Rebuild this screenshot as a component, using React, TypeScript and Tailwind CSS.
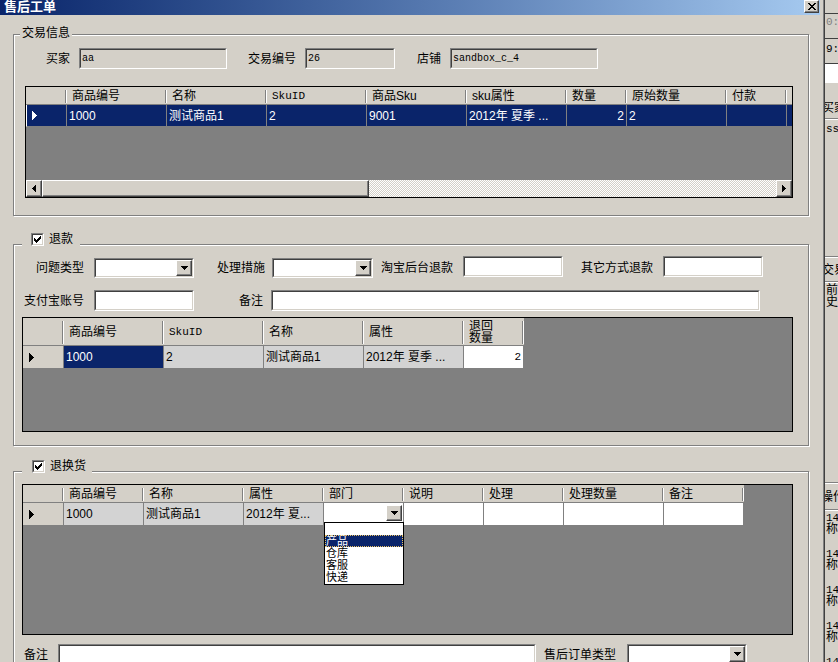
import React from "react"

const font = "font-['Liberation_Sans','Noto_Sans_CJK_SC',sans-serif]"
const mono = "font-['Liberation_Mono','Noto_Sans_CJK_SC',monospace]"

function Tri({ color = "#000" }: { color?: string }) {
  return (
    <svg width="5" height="9" viewBox="0 0 5 9" shapeRendering="crispEdges">
      <polygon points="0,0 5,4.5 0,9" fill={color} />
    </svg>
  )
}

function DownArrow() {
  return (
    <svg width="7" height="4" viewBox="0 0 7 4" shapeRendering="crispEdges">
      <polygon points="0,0 7,0 3.5,4" fill="#000" />
    </svg>
  )
}

function Raised({ className = "", children }: { className?: string; children?: React.ReactNode }) {
  return (
    <div
      className={`flex items-center justify-center shrink-0 bg-[#d4d0c8] border border-t-white border-l-white border-b-[#404040] border-r-[#404040] shadow-[inset_-1px_-1px_0_#808080] ${className}`}
    >
      {children}
    </div>
  )
}

function Sunken({
  className = "",
  inner = "bg-white",
  children,
}: {
  className?: string
  inner?: string
  children?: React.ReactNode
}) {
  return (
    <div
      className={`shrink-0 border border-t-[#808080] border-l-[#808080] border-b-white border-r-white ${className}`}
    >
      <div
        className={`h-full border border-t-[#404040] border-l-[#404040] border-b-[#d4d0c8] border-r-[#d4d0c8] ${inner}`}
      >
        {children}
      </div>
    </div>
  )
}

function Combo({ className = "" }: { className?: string }) {
  return (
    <Sunken className={className}>
      <div className="h-full flex justify-end">
        <Raised className="w-[16px] h-full">
          <DownArrow />
        </Raised>
      </div>
    </Sunken>
  )
}

function CheckBox() {
  return (
    <div className="w-[13px] h-[13px] shrink-0 border border-t-[#808080] border-l-[#808080] border-b-white border-r-white">
      <div className="w-full h-full border border-t-[#404040] border-l-[#404040] border-b-[#d4d0c8] border-r-[#d4d0c8] bg-white flex items-center justify-center">
        <svg width="7" height="7" viewBox="0 0 7 7" shapeRendering="crispEdges">
          <path d="M0 2h1v3h-1z M1 3h1v3h-1z M2 4h1v3h-1z M3 3h1v3h-1z M4 2h1v3h-1z M5 1h1v3h-1z M6 0h1v3h-1z" fill="#000" />
        </svg>
      </div>
    </div>
  )
}

function Label({ className = "", children }: { className?: string; children: React.ReactNode }) {
  return (
    <div className={`shrink-0 flex items-center justify-end whitespace-nowrap leading-[14px] ${className}`}>
      {children}
    </div>
  )
}

function Group({ className = "", children }: { className?: string; children: React.ReactNode }) {
  return (
    <div
      className={`relative w-[796px] shrink-0 border border-[#808080] shadow-[inset_1px_1px_0_#fff,1px_1px_0_#fff] flex flex-col ${className}`}
    >
      {children}
    </div>
  )
}

function HeadCell({ className = "", children }: { className?: string; children?: React.ReactNode }) {
  return (
    <div className={`shrink-0 h-full flex bg-[#d4d0c8] border-b border-b-[#808080] ${className}`}>
      <div className="flex-1 pl-[5px] flex items-center whitespace-nowrap overflow-hidden leading-[12px]">
        {children}
      </div>
      <div className="w-[2px] mt-[3px] mb-[1px] border-l border-l-[#808080] border-r border-r-white" />
    </div>
  )
}

function Cell({ className = "", children }: { className?: string; children?: React.ReactNode }) {
  return (
    <div
      className={`shrink-0 h-full px-[2px] flex items-center whitespace-nowrap overflow-hidden border-r border-r-[#808080] border-b border-b-[#808080] ${className}`}
    >
      {children}
    </div>
  )
}

const grid1 = [
  { w: "w-[100px]", h: "商品编号", v: "1000" },
  { w: "w-[100px]", h: "名称", v: "测试商品1" },
  { w: "w-[100px]", h: <span className={`${mono} text-[11px]`}>SkuID</span>, v: "2" },
  { w: "w-[100px]", h: "商品Sku", v: "9001" },
  { w: "w-[100px]", h: "sku属性", v: "2012年 夏季 ..." },
  { w: "w-[60px]", h: "数量", v: "2", right: true },
  { w: "w-[100px]", h: "原始数量", v: "2" },
  { w: "w-[60px]", h: "付款", v: "" },
  { w: "w-[100px]", h: "", v: "" },
]

function TradeGrid() {
  return (
    <div className="ml-[11px] mt-[17px] w-[768px] h-[112px] shrink-0 border border-black bg-[#808080] flex flex-col overflow-hidden">
      <div className="flex h-[18px] shrink-0">
        <HeadCell className="w-[41px]" />
        {grid1.map((c, i) => (
          <HeadCell key={i} className={c.w}>
            {c.h}
          </HeadCell>
        ))}
      </div>
      <div className="flex h-[22px] shrink-0 text-white">
        <Cell className="w-[41px] bg-[#0a246a] border-l border-l-white pl-[5px]">
          <Tri color="#fff" />
        </Cell>
        {grid1.map((c, i) => (
          <Cell key={i} className={`${c.w} bg-[#0a246a] ${c.right ? "justify-end" : ""}`}>
            {c.v}
          </Cell>
        ))}
      </div>
      <div className="flex-1" />
      <div className="h-[17px] shrink-0 flex">
        <Raised className="w-[16px] h-full">
          <svg width="4" height="7" viewBox="0 0 4 7" shapeRendering="crispEdges">
            <polygon points="4,0 0,3.5 4,7" fill="#000" />
          </svg>
        </Raised>
        <Raised className="w-[327px] h-full" />
        <div className="flex-1 bg-[repeating-conic-gradient(#ffffff_0%_25%,#d4d0c8_0%_50%)] bg-[length:2px_2px]" />
        <Raised className="w-[16px] h-full">
          <svg width="4" height="7" viewBox="0 0 4 7" shapeRendering="crispEdges">
            <polygon points="0,0 4,3.5 0,7" fill="#000" />
          </svg>
        </Raised>
      </div>
    </div>
  )
}

function RefundGrid() {
  return (
    <div className="ml-[8px] mt-[6px] w-[771px] h-[115px] shrink-0 border border-black bg-[#808080] flex flex-col overflow-hidden">
      <div className="flex h-[28px] shrink-0">
        <HeadCell className="w-[41px]" />
        <HeadCell className="w-[100px]">商品编号</HeadCell>
        <HeadCell className="w-[100px]">
          <span className={`${mono} text-[11px]`}>SkuID</span>
        </HeadCell>
        <HeadCell className="w-[100px]">名称</HeadCell>
        <HeadCell className="w-[100px]">属性</HeadCell>
        <HeadCell className="w-[60px]">
          <span className="leading-[12px]">
            退回
            <br />
            数量
          </span>
        </HeadCell>
      </div>
      <div className="flex h-[23px] shrink-0">
        <Cell className="w-[41px] bg-[#d4d0c8] pl-[6px]">
          <Tri />
        </Cell>
        <Cell className="w-[100px] bg-[#0a246a] text-white">1000</Cell>
        <Cell className="w-[100px] bg-[#d3d3d3]">2</Cell>
        <Cell className="w-[100px] bg-[#d3d3d3]">测试商品1</Cell>
        <Cell className="w-[100px] bg-[#d3d3d3]">2012年 夏季 ...</Cell>
        <Cell className="w-[60px] bg-white justify-end">
          <span className={`${mono} text-[11px]`}>2</span>
        </Cell>
      </div>
    </div>
  )
}

function ExchangeGrid() {
  return (
    <div className="ml-[8px] mt-[12px] w-[771px] h-[151px] shrink-0 border border-black bg-[#808080] flex flex-col overflow-hidden">
      <div className="flex h-[18px] shrink-0">
        <HeadCell className="w-[41px]" />
        <HeadCell className="w-[80px]">商品编号</HeadCell>
        <HeadCell className="w-[100px]">名称</HeadCell>
        <HeadCell className="w-[80px]">属性</HeadCell>
        <HeadCell className="w-[80px]">部门</HeadCell>
        <HeadCell className="w-[80px]">说明</HeadCell>
        <HeadCell className="w-[80px]">处理</HeadCell>
        <HeadCell className="w-[100px]">处理数量</HeadCell>
        <HeadCell className="w-[80px]">备注</HeadCell>
      </div>
      <div className="flex h-[23px] shrink-0">
        <Cell className="w-[41px] bg-[#d4d0c8] pl-[6px]">
          <Tri />
        </Cell>
        <Cell className="w-[80px] bg-[#d3d3d3]">1000</Cell>
        <Cell className="w-[100px] bg-[#d3d3d3]">测试商品1</Cell>
        <Cell className="w-[80px] bg-[#d3d3d3]">2012年 夏...</Cell>
        <div className="w-[80px] h-full shrink-0 flex flex-col border-r border-r-[#808080]">
          <div className="h-[19px] bg-white flex justify-end items-center pr-[1px]">
            <Raised className="w-[16px] h-[16px]">
              <DownArrow />
            </Raised>
          </div>
        </div>
        <Cell className="w-[80px] bg-white" />
        <Cell className="w-[80px] bg-white" />
        <Cell className="w-[100px] bg-white" />
        <Cell className="w-[80px] bg-white" />
      </div>
    </div>
  )
}

function Etch() {
  return <div className="h-[2px] shrink-0 border-t border-t-[#808080] border-b border-b-white" />
}

function RightStrip() {
  return (
    <div className="w-[18px] shrink-0 flex">
      <div className="w-[3px] shrink-0" />
      <div className="w-[2px] shrink-0 border-l border-l-[#808080] border-r border-r-[#404040]" />
      <div className={`flex-1 flex flex-col overflow-hidden text-[12px] leading-[12px] ${mono}`}>
        <div className="mt-[13px] h-[14px] shrink-0 border-t border-t-[#404040] text-[#808080] whitespace-nowrap pl-[1px] pt-[3px] text-[11px] leading-[10px]">
          0:0
        </div>
        <div className="mt-[11px] h-[17px] shrink-0 border-t border-t-[#404040] whitespace-nowrap pl-[1px] pt-[5px] text-[11px] leading-[10px]">
          9:5
        </div>
        <div className="mt-[8px] h-[20px] shrink-0 bg-white border-t border-t-[#404040]" />
        <div className={`mt-[14px] h-[21px] shrink-0 whitespace-nowrap ${font} -ml-[3px] flex items-center`}>买家</div>
        <Etch />
        <div className="h-[136px] shrink-0 whitespace-nowrap pt-[4px] pl-[1px] text-[11px] leading-[10px]">ss</div>
        <Etch />
        <div className={`h-[23px] shrink-0 whitespace-nowrap ${font} -ml-[3px] flex items-center`}>交易</div>
        <Etch />
        <div className={`h-[199px] shrink-0 whitespace-nowrap ${font} pl-[1px] pt-[1px]`}>
          前<br />史
        </div>
        <Etch />
        <div className={`h-[25px] shrink-0 whitespace-nowrap ${font} -ml-[4px] flex items-center`}>操作</div>
        <Etch />
        <div className="pt-[2px] flex flex-col">
          {[0, 1, 2, 3, 4].map((i) => (
            <div key={i} className={`h-[36px] shrink-0 pl-[1px] whitespace-nowrap ${font}`}>
              <div className={`${mono} text-[11px] leading-[10px]`}>14</div>
              <div className="leading-[12px]">称</div>
            </div>
          ))}
        </div>
      </div>
    </div>
  )
}

export default function App() {
  return (
    <div className={`relative w-[838px] h-[662px] overflow-hidden bg-[#d4d0c8] flex text-[12px] text-black ${font}`}>
      <div className="w-[820px] shrink-0 flex flex-col">
        {/* Title bar */}
        <div className="h-[15px] shrink-0 flex items-start bg-linear-to-r from-[#0a246a] to-[#a6caf0]">
          <div className="pl-[4px] text-white font-bold text-[13px] leading-[13px]">售后工单</div>
          <div className="flex-1" />
          <Raised className="w-[15px] h-[13px] mr-[1px]">
            <svg width="8" height="7" viewBox="0 0 8 7" shapeRendering="crispEdges">
              <path d="M0 0h2v1h-2z M6 0h2v1h-2z M1 1h2v1h-2z M5 1h2v1h-2z M2 2h4v1h-4z M3 3h2v1h-2z M2 4h4v1h-4z M1 5h2v1h-2z M5 5h2v1h-2z M0 6h2v1h-2z M6 6h2v1h-2z" fill="#000" />
            </svg>
          </Raised>
        </div>

        <div className="pl-[13px] flex flex-col">
          {/* 交易信息 */}
          <Group className="mt-[19px] h-[182px]">
            <div className="absolute left-[6px] -top-[9px] px-[2px] bg-[#d4d0c8] leading-[14px]">交易信息</div>
            <div className="flex items-center mt-[13px] h-[21px]">
              <Label className="w-[56px]">买家</Label>
              <Sunken className="ml-[9px] w-[148px] h-[21px]" inner="bg-[#d4d0c8]">
                <div className={`h-full flex items-center pl-[1px] text-[10px] ${mono}`}>aa</div>
              </Sunken>
              <Label className="w-[69px]">交易编号</Label>
              <Sunken className="ml-[9px] w-[90px] h-[21px]" inner="bg-[#d4d0c8]">
                <div className={`h-full flex items-center pl-[1px] text-[10px] ${mono}`}>26</div>
              </Sunken>
              <Label className="w-[46px]">店铺</Label>
              <Sunken className="ml-[9px] w-[148px] h-[21px]" inner="bg-[#d4d0c8]">
                <div className={`h-full flex items-center pl-[1px] text-[10px] ${mono}`}>sandbox_c_4</div>
              </Sunken>
            </div>
            <TradeGrid />
          </Group>

          {/* 退款 */}
          <Group className="mt-[28px] h-[202px]">
            <div className="absolute left-[8px] -top-[12px] pl-[9px] pr-[7px] h-[14px] bg-[#d4d0c8] flex items-start gap-[5px]">
              <CheckBox />
              <span className="leading-[13px]">退款</span>
            </div>
            <div className="flex items-start mt-[11px] h-[23px]">
              <Label className="w-[70px] h-[23px]">问题类型</Label>
              <Combo className="ml-[10px] mt-[2px] w-[100px] h-[20px]" />
              <Label className="w-[71px] h-[23px]">处理措施</Label>
              <Combo className="ml-[7px] mt-[2px] w-[101px] h-[20px]" />
              <Label className="w-[80px] h-[23px]">淘宝后台退款</Label>
              <Sunken className="ml-[10px] w-[100px] h-[21px]" />
              <Label className="w-[90px] h-[23px]">其它方式退款</Label>
              <Sunken className="ml-[10px] w-[100px] h-[21px]" />
            </div>
            <div className="flex items-center mt-[11px] h-[21px]">
              <Label className="w-[70px] h-[21px]">支付宝账号</Label>
              <Sunken className="ml-[10px] w-[100px] h-[21px]" />
              <Label className="w-[69px] h-[21px]">备注</Label>
              <Sunken className="ml-[8px] w-[489px] h-[21px]" />
            </div>
            <RefundGrid />
          </Group>

          {/* 退换货 */}
          <Group className="mt-[25px] h-[250px]">
            <div className="absolute left-[8px] -top-[12px] pl-[10px] pr-[6px] h-[14px] bg-[#d4d0c8] flex items-start gap-[5px]">
              <CheckBox />
              <span className="leading-[13px]">退换货</span>
            </div>
            <ExchangeGrid />
            <div className="flex items-start mt-[9px] h-[21px]">
              <Label className="w-[34px] h-[21px]">备注</Label>
              <Sunken className="ml-[10px] w-[478px] h-[21px]" />
              <Label className="w-[80px] h-[21px]">售后订单类型</Label>
              <Combo className="ml-[11px] w-[120px] h-[20px]" />
            </div>
          </Group>
        </div>
      </div>

      <RightStrip />

      {/* open dropdown list of 部门 */}
      <div className="absolute left-[324px] top-[522px] w-[80px] h-[63px] border border-black bg-white flex flex-col text-[11px] leading-[12px]">
        <div className="h-[12px]" />
        <div className="h-[12px] bg-[#0a246a] text-white outline-1 outline-dotted outline-[#e8c060] -outline-offset-1 pl-[1px] overflow-hidden">产品</div>
        <div className="h-[12px] pl-[1px] overflow-hidden">仓库</div>
        <div className="h-[12px] pl-[1px] overflow-hidden">客服</div>
        <div className="h-[12px] pl-[1px] overflow-hidden">快递</div>
      </div>
    </div>
  )
}
